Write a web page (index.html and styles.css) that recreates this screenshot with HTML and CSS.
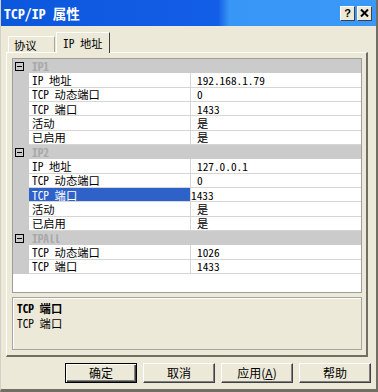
FILE: index.html
```html
<!DOCTYPE html>
<html>
<head>
<meta charset="utf-8">
<link rel="stylesheet" href="styles.css">
</head>
<body>
<div class="window">
  <div class="titlebar">
    <span class="title">TCP/IP 属性</span>
    <div class="tbtns">
      <span class="tbtn help">?</span>
      <span class="tbtn close"><svg width="9" height="8" viewBox="0 0 9 8"><path d="M1 0.5 L8 7.5 M8 0.5 L1 7.5" stroke="#000" stroke-width="2"/></svg></span>
    </div>
  </div>
  <div class="body">
    <div class="tabs">
      <div class="tab">协议</div>
      <div class="tab active">IP 地址</div>
    </div>
    <div class="panel">
      <div class="grid">
        <div class="cat"><span class="toggle"></span><span class="catname">IP1</span></div>
        <div class="row"><div class="gut"></div><div class="name">IP 地址</div><div class="val">192.168.1.79</div></div>
        <div class="row"><div class="gut"></div><div class="name">TCP 动态端口</div><div class="val">0</div></div>
        <div class="row"><div class="gut"></div><div class="name">TCP 端口</div><div class="val">1433</div></div>
        <div class="row"><div class="gut"></div><div class="name">活动</div><div class="val">是</div></div>
        <div class="row"><div class="gut"></div><div class="name">已启用</div><div class="val">是</div></div>
        <div class="cat"><span class="toggle"></span><span class="catname">IP2</span></div>
        <div class="row"><div class="gut"></div><div class="name">IP 地址</div><div class="val">127.0.0.1</div></div>
        <div class="row"><div class="gut"></div><div class="name">TCP 动态端口</div><div class="val">0</div></div>
        <div class="row"><div class="gut"></div><div class="name selected">TCP 端口</div><div class="val tight">1433</div></div>
        <div class="row"><div class="gut"></div><div class="name">活动</div><div class="val">是</div></div>
        <div class="row"><div class="gut"></div><div class="name">已启用</div><div class="val">是</div></div>
        <div class="cat"><span class="toggle"></span><span class="catname">IPAll</span></div>
        <div class="row"><div class="gut"></div><div class="name">TCP 动态端口</div><div class="val">1026</div></div>
        <div class="row"><div class="gut"></div><div class="name">TCP 端口</div><div class="val">1433</div></div>
        <div class="filler"></div>
      </div>
      <div class="desc">
        <div class="dtitle">TCP 端口</div>
        <div class="dtext">TCP 端口</div>
      </div>
    </div>
    <div class="buttons">
      <div class="btn default">确定</div>
      <div class="btn">取消</div>
      <div class="btn">应用(<u>A</u>)</div>
      <div class="btn">帮助</div>
    </div>
  </div>
</div>
</body>
</html>
```
FILE: styles.css
```css
html, body {
  margin: 0;
  padding: 0;
  background: #ece9d8;
}
.window {
  width: 378px;
  height: 392px;
  box-sizing: border-box;
  background: #ece9d8;
  border-right: 2px solid #716f64;
  border-bottom: 3px solid #716f64;
  border-left: 1px solid #d4d0c8;
  font-family: "Noto Sans Mono CJK SC", "Liberation Mono", "Noto Sans CJK SC", monospace;
  font-size: 11.3px;
  line-height: 12px;
  color: #000;
  overflow: hidden;
}
.titlebar {
  height: 26px;
  display: flex;
  align-items: center;
  justify-content: space-between;
  padding: 0 4px 0 4px;
  background: linear-gradient(to right, #0b57dc 0%, #135ee6 58%, #3896f6 61%, #3a98f8 100%);
  box-sizing: border-box;
  margin-left: -1px;
}
.title {
  color: #fff;
  font-weight: bold;
  font-size: 13.5px;
  line-height: 16px;
  letter-spacing: 0.2px;
}
.tbtns {
  display: flex;
  gap: 2px;
}
.tbtn {
  width: 15px;
  height: 15px;
  box-sizing: border-box;
  background: #ece9d8;
  border-top: 1px solid #fff;
  border-left: 1px solid #fff;
  border-right: 1px solid #404040;
  border-bottom: 1px solid #404040;
  display: flex;
  align-items: center;
  justify-content: center;
  font-family: "Liberation Sans", sans-serif;
  font-weight: bold;
  font-size: 11px;
  line-height: 1;
}
.body {
  display: flex;
  flex-direction: column;
}
.tabs {
  height: 26px;
  display: flex;
  align-items: flex-end;
  padding-left: 7px;
  position: relative;
  z-index: 2;
}
.tab {
  height: 16px;
  width: 47px;
  box-sizing: border-box;
  border-top: 1px solid #fff;
  border-left: 1px solid #fff;
  border-right: 1px solid #aca899;
  display: flex;
  align-items: center;
  padding-left: 5px;
  padding-top: 1px;
}
.tab.active {
  height: 21px;
  width: 54px;
  margin-bottom: -1px;
  background: #ece9d8;
  border-right: 1px solid #404040;
  padding-left: 6px;
  padding-top: 0;
  margin-left: 1px;
}
.panel {
  margin-left: 5px;
  width: 362px;
  height: 305px;
  box-sizing: border-box;
  border-top: 1px solid #fff;
  border-left: 1px solid #fff;
  border-right: 2px solid #716f64;
  border-bottom: 2px solid #716f64;
  padding: 5px 4px 5px 5px;
  display: flex;
  flex-direction: column;
  gap: 4px;
}
.grid {
  height: 235px;
  box-sizing: border-box;
  border: 1px solid #9d9d9d;
  background: #fff;
  display: flex;
  flex-direction: column;
}
.cat {
  height: 14.33px;
  flex: none;
  background: #cbcbcb;
  display: flex;
  align-items: center;
  overflow: hidden;
}
.toggle {
  width: 9px;
  height: 9px;
  box-sizing: border-box;
  border: 1px solid #000;
  margin-left: 2px;
  position: relative;
  flex: none;
}
.toggle::after {
  content: "";
  position: absolute;
  left: 1px;
  top: 3px;
  width: 5px;
  height: 1px;
  background: #000;
}
.catname {
  margin-left: 8px;
  font-weight: bold;
  color: #a9a9a9;
}
.row {
  height: 14.33px;
  flex: none;
  display: grid;
  grid-template-columns: 16px 161px 1fr;
  overflow: hidden;
}
.gut {
  background: #cbcbcb;
}
.name {
  border-bottom: 1px solid #d6d6d6;
  padding-left: 3px;
  display: flex;
  align-items: center;
  white-space: nowrap;
  overflow: hidden;
}
.name.selected {
  background: #2f62c8;
  color: #fff;
}
.val {
  border-left: 1px solid #d6d6d6;
  border-bottom: 1px solid #d6d6d6;
  padding-left: 6px;
  display: flex;
  align-items: center;
  white-space: nowrap;
  overflow: hidden;
}
.val.tight {
  padding-left: 0;
}
.filler {
  flex: 1;
}
.desc {
  height: 53px;
  box-sizing: border-box;
  border: 1px solid #a5a5a5;
  box-shadow: inset 1px 1px 0 #fff;
  padding: 2px 0 0 4px;
}
.dtitle {
  font-weight: bold;
  height: 15px;
  display: flex;
  align-items: center;
}
.dtext {
  height: 15px;
  display: flex;
  align-items: center;
}
.buttons {
  display: flex;
  gap: 6px;
  padding-left: 64px;
  padding-top: 6px;
}
.btn {
  width: 72px;
  height: 20px;
  box-sizing: border-box;
  background: #ece9d8;
  border-top: 1px solid #fff;
  border-left: 1px solid #fff;
  border-right: 1px solid #404040;
  border-bottom: 1px solid #404040;
  box-shadow: inset -1px -1px 0 #808080;
  display: flex;
  align-items: center;
  justify-content: center;
  font-family: "Noto Sans CJK SC", sans-serif;
  font-size: 12px;
  line-height: 14px;
}
.btn.default {
  border: 1px solid #000;
  box-shadow: inset 1px 1px 0 #fff, inset -1px -1px 0 #404040, inset -2px -2px 0 #808080;
}
```
